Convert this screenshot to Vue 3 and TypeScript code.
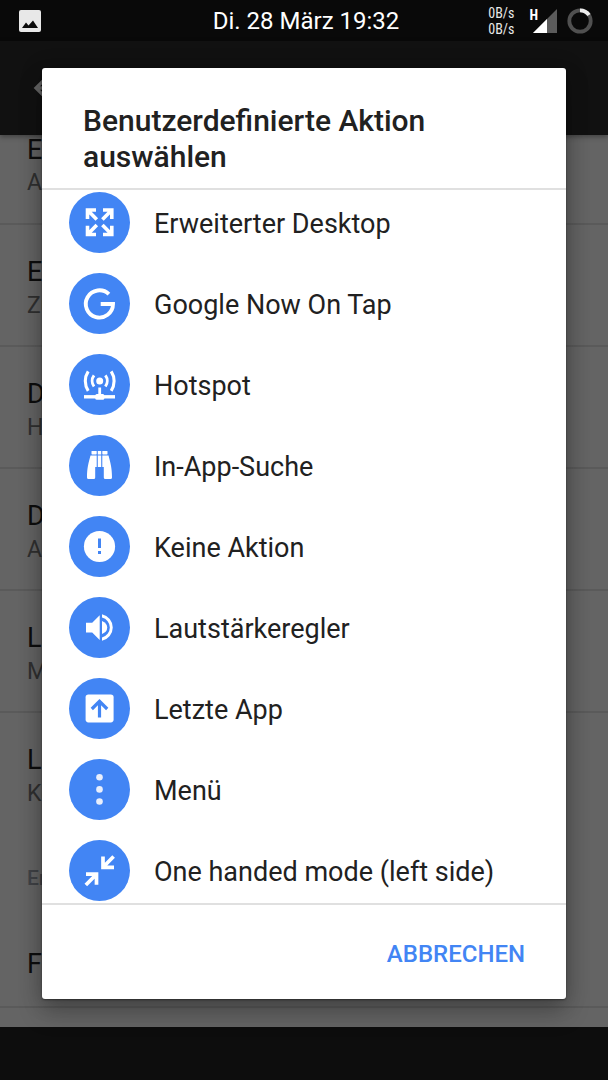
<script setup lang="ts">
import { ref } from 'vue'

type IconName =
  | 'expand' | 'google' | 'hotspot' | 'binoculars' | 'alert'
  | 'volume' | 'last' | 'menu' | 'shrink'

interface Action {
  icon: IconName
  label: string
}

interface Preference {
  title: string
  summary: string
}

const actions: Action[] = [
  { icon: 'expand', label: 'Erweiterter Desktop' },
  { icon: 'google', label: 'Google Now On Tap' },
  { icon: 'hotspot', label: 'Hotspot' },
  { icon: 'binoculars', label: 'In-App-Suche' },
  { icon: 'alert', label: 'Keine Aktion' },
  { icon: 'volume', label: 'Lautstärkeregler' },
  { icon: 'last', label: 'Letzte App' },
  { icon: 'menu', label: 'Menü' },
  { icon: 'shrink', label: 'One handed mode (left side)' },
]

const preferences: Preference[] = [
  { title: 'E', summary: 'A' },
  { title: 'E', summary: 'Zu' },
  { title: 'D', summary: 'H' },
  { title: 'D', summary: 'A' },
  { title: 'L', summary: 'M' },
  { title: 'L', summary: 'Ko' },
]

const selected = ref<IconName | null>(null)
</script>

<template>
  <div class="screen">
    <div class="backdrop">
      <header class="status">
        <svg class="status-picture" viewBox="0 0 22 22" aria-hidden="true">
          <rect width="22" height="22" rx="2" fill="#e8e8e8" />
          <path d="M3 18 7 12.5 9.5 15.5 14 10.5 19 18z" fill="#0a0a0a" />
        </svg>
        <time class="clock">Di. 28 März 19:32</time>
        <div class="status-right">
          <div class="rates"><span>0B/s</span><span>0B/s</span></div>
          <div class="signal">
            <span class="network">H</span>
            <svg viewBox="0 0 24 24" aria-hidden="true">
              <path d="M24 0V24H0z" fill="#5c5c5c" />
              <path d="M14 10V24H0z" fill="#fff" />
            </svg>
          </div>
          <svg class="ring" viewBox="0 0 26 26" aria-hidden="true">
            <circle cx="13" cy="13" r="10.7" fill="none" stroke="#505050" stroke-width="3.8" />
            <path d="M13 2.3A10.7 10.7 0 0 1 22 7" fill="none" stroke="#eee" stroke-width="3.8" />
          </svg>
        </div>
      </header>
      <div class="appbar">
        <svg viewBox="0 0 24 24" aria-hidden="true">
          <path d="M20 11H7.83l5.59-5.59L12 4l-8 8 8 8 1.41-1.41L7.83 13H20z" fill="#666" />
        </svg>
      </div>
      <div class="settings">
        <div v-for="(item, i) in preferences" :key="i" class="pref">
          <div class="pref-title">{{ item.title }}</div>
          <div class="pref-summary">{{ item.summary }}</div>
        </div>
        <div class="category">Er</div>
        <div class="pref single"><div class="pref-title">F</div></div>
      </div>
      <div class="navbar"></div>
    </div>

    <div class="overlay">
      <section class="dialog" role="dialog" aria-modal="true" aria-labelledby="dialog-title">
        <h1 id="dialog-title">Benutzerdefinierte Aktion auswählen</h1>
        <ul class="actions">
          <li v-for="action in actions" :key="action.icon">
            <button type="button" class="action" @click="selected = action.icon">
              <svg class="icon" viewBox="0 0 61 61" aria-hidden="true">
                <circle cx="30.5" cy="30.5" r="30.5" fill="#4285f4" />
                <g v-if="action.icon === 'expand'" fill="none" stroke="#fff" stroke-width="3.6">
                  <path d="M27 18H18.5V27M18.5 18 27.8 27.6" />
                  <path d="M34 18H42.8V27M42.8 18 33.4 27.6" />
                  <path d="M27 42.5H18.5V33.8M18.5 42.5 27.8 33" />
                  <path d="M34 42.5H42.8V33.8M42.8 42.5 33.4 33" />
                </g>
                <path
                  v-else-if="action.icon === 'google'"
                  d="M39.9 21.2A13.6 13.6 0 1 0 44 31H31.7"
                  fill="none" stroke="#fff" stroke-width="3.9"
                />
                <g v-else-if="action.icon === 'hotspot'" fill="none" stroke="#fff">
                  <circle cx="30.7" cy="27" r="3.5" fill="#fff" stroke="none" />
                  <path d="M25 21.3A9.5 9.5 0 0 0 25 32.5M36.4 21.3A9.5 9.5 0 0 1 36.4 32.5" stroke-width="2.9" />
                  <path d="M19.2 17.3A18 18 0 0 0 19.2 36.9M42.2 17.3A18 18 0 0 1 42.2 36.9" stroke-width="3.1" />
                  <path d="M30.7 33.5V41" stroke-width="2.8" />
                  <path d="M15 42.8H46" stroke-width="3.4" />
                  <rect x="26.3" y="40" width="9" height="5.8" rx="1.5" fill="#fff" stroke="none" />
                </g>
                <g v-else-if="action.icon === 'binoculars'" fill="#fff">
                  <rect x="22.5" y="16" width="5.2" height="3.4" rx=".6" />
                  <rect x="33.3" y="16" width="5.2" height="3.4" rx=".6" />
                  <path d="M28.8 16H32.2V19.4H28.8zM28.8 20.6H32.2V32H28.8z" />
                  <path d="M21.5 20.6H27.7V32H26.2V42.5Q26.2 44 24.7 44H19.5Q18 44 18 42.5C18 33 19.5 28 21.5 20.6z" />
                  <path d="M39.5 20.6H33.3V32H34.8V42.5Q34.8 44 36.3 44H41.5Q43 44 43 42.5C43 33 41.5 28 39.5 20.6z" />
                </g>
                <g v-else-if="action.icon === 'alert'">
                  <circle cx="30.5" cy="30.5" r="15.6" fill="#fff" />
                  <path d="M29 22.5H32V32H29zM29 35H32V38H29z" fill="#4285f4" />
                </g>
                <g v-else-if="action.icon === 'volume'" fill="#fff">
                  <path d="M17 25.7H23.2L30.7 18.2V43L23.2 35.4H17z" />
                  <path d="M33 17.2A13.6 13.6 0 0 1 33 43.8V40.5A10.3 10.3 0 0 0 33 20.5z" />
                  <path d="M33 24Q38.2 26 38.2 30.5T33 37z" />
                </g>
                <g v-else-if="action.icon === 'last'">
                  <rect x="16.6" y="16.4" width="28" height="28" rx="2.8" fill="#fff" />
                  <path d="M30.5 39.5V23.5M22.8 31 30.5 23.3 38.2 31" fill="none" stroke="#4285f4" stroke-width="3.2" />
                </g>
                <g v-else-if="action.icon === 'menu'" fill="#e9effc">
                  <circle cx="30.5" cy="18.2" r="3.3" />
                  <circle cx="30.5" cy="30.4" r="3.3" />
                  <circle cx="30.5" cy="42.5" r="3.3" />
                </g>
                <g v-else fill="none" stroke="#fff" stroke-width="3.7">
                  <path d="M34 16.5V27.3H45M34 27.3 44.6 16.5" />
                  <path d="M17 34.2H27.5V44.8M27.5 34.2 16.8 45" />
                </g>
              </svg>
              <span class="label">{{ action.label }}</span>
            </button>
          </li>
        </ul>
        <footer class="footer">
          <button type="button" class="cancel">ABBRECHEN</button>
        </footer>
      </section>
    </div>
  </div>
</template>

<style>
body {
  margin: 0;
  background: #0d0d0d;
}
</style>

<style scoped>
.screen {
  display: grid;
  min-height: 100vh;
  font-family: Roboto, "Noto Sans", sans-serif;
  color: #212121;
}
.backdrop,
.overlay {
  grid-area: 1 / 1;
  min-width: 0;
}
.backdrop {
  display: flex;
  flex-direction: column;
}
.status {
  display: grid;
  grid-template-columns: 1fr auto 1fr;
  align-items: center;
  height: 41px;
  padding: 0 15px 0 19px;
  background: #090909;
  color: #fff;
}
.status-picture {
  width: 22px;
  height: 22px;
}
.clock {
  font-size: 24px;
  line-height: 40px;
}
.status-right {
  display: flex;
  align-items: center;
  justify-content: flex-end;
  gap: 10px;
}
.rates {
  display: flex;
  flex-direction: column;
  margin-right: 5px;
  font-family: "Roboto Condensed", Roboto, sans-serif;
  font-size: 14px;
  line-height: 16px;
  color: #e8e8e8;
}
.signal {
  display: flex;
  align-items: flex-start;
}
.signal svg {
  width: 24px;
  height: 24px;
  margin-left: -5px;
}
.network {
  font-family: "Roboto Condensed", Roboto, sans-serif;
  font-size: 14px;
  font-weight: 700;
  line-height: 12px;
}
.ring {
  width: 26px;
  height: 26px;
}
.appbar {
  display: flex;
  align-items: center;
  height: 94px;
  padding: 0 27px;
  background: #111;
  box-shadow: 0 2px 5px rgba(0, 0, 0, 0.35);
  z-index: 1;
}
.appbar svg {
  width: 40px;
  height: 40px;
}
.settings {
  flex: 1;
  background: #646464;
}
.pref {
  box-sizing: border-box;
  height: 122px;
  padding: 31px 27px 0;
  border-bottom: 2px solid #5a5a5a;
}
.pref:first-child {
  height: 90px;
  padding-top: 0;
}
.pref:nth-child(6) {
  border-bottom: 0;
}
.pref-title {
  font-size: 27px;
  line-height: 32px;
  color: #0d0d0d;
}
.pref:first-child .pref-title {
  line-height: 30px;
}
.pref-summary {
  padding-top: 4px;
  font-size: 23px;
  line-height: 28px;
  color: #303030;
}
.category {
  padding: 30px 27px 0;
  font-size: 21px;
  font-weight: 500;
  line-height: 26px;
  color: #404246;
}
.pref.single {
  height: 117px;
  padding-top: 57px;
}
.navbar {
  height: 53px;
  background: #0d0d0d;
}
.overlay {
  z-index: 2;
  padding: 68px 42px 81px;
}
.dialog {
  overflow: hidden;
  border-radius: 3px;
  background: #fff;
  box-shadow: 0 14px 24px rgba(0, 0, 0, 0.22), 0 2px 22px rgba(0, 0, 0, 0.22), 0 1px 2px rgba(0, 0, 0, 0.4);
}
h1 {
  margin: 0;
  padding: 35px 41px 13px;
  font-size: 30px;
  font-weight: 500;
  line-height: 36px;
}
.actions {
  display: flex;
  flex-direction: column;
  gap: 20px;
  margin: 0;
  padding: 2px 0;
  border: solid #e0e0e0;
  border-width: 2px 0;
  list-style: none;
}
.action {
  display: flex;
  align-items: center;
  gap: 24px;
  width: 100%;
  padding: 0 27px;
  border: 0;
  background: none;
  font: inherit;
  font-size: 27px;
  line-height: 32px;
  color: inherit;
  text-align: left;
}
.label {
  padding-top: 2px;
}
.icon {
  flex: none;
  width: 61px;
  height: 61px;
}
.footer {
  display: flex;
  justify-content: flex-end;
  padding: 31px 41px 27px;
}
.cancel {
  padding: 0;
  border: 0;
  background: none;
  font: inherit;
  font-size: 24px;
  font-weight: 500;
  line-height: 36px;
  color: #4285f4;
}
</style>
